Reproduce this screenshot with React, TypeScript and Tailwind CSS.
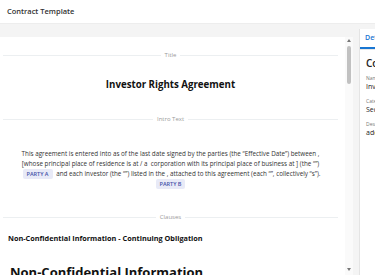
import React from "react";

function Divider({ label }: { label: string }) {
  return (
    <div className="flex items-center h-[8px] gap-[4px]">
      <div className="flex-1 h-px bg-[#eceff1]" />
      <span className="text-[6px] leading-[8px] text-[#9a9a9a]">{label}</span>
      <div className="flex-1 h-px bg-[#eceff1]" />
    </div>
  );
}

function Badge({ children }: { children: React.ReactNode }) {
  return (
    <span className="inline-block align-middle mx-[2px] px-[4px] h-[10px] leading-[10px] rounded-[2px] bg-[#e8eaf7] text-[#4652a8] text-[5.5px] font-semibold">
      {children}
    </span>
  );
}

export default function App() {
  return (
    <div className="w-[375px] h-[275px] overflow-hidden bg-white font-['Open_Sans',sans-serif] text-[#222]">
      <div className="h-[24px] border-b border-[#ededed] flex items-center px-[7px]">
        <span className="text-[7.5px] font-semibold text-[#333]">Contract Template</span>
      </div>
      <div className="flex h-[251px] bg-[#f4f4f4]">
        <div className="w-[353px] shrink-0 flex flex-col pt-[13px]">
          <div className="flex-1 flex bg-white overflow-hidden">
            <div className="w-[345px] pl-[3px] pr-[7px] pt-[14px]">
              <Divider label="Title" />
              <div className="mt-[19px] h-[14px] leading-[14px] text-center text-[9.7px] font-bold text-[#111]">
                Investor Rights Agreement
              </div>
              <div className="mt-[23px]">
                <Divider label="Intro Text" />
              </div>
              <div className="mt-[26px] text-center text-[6.3px] leading-[10px] text-[#333] whitespace-nowrap">
                <div className="h-[10px]">
                  This agreement is entered into as of the last date signed by the parties (the “Effective Date”) between ,
                </div>
                <div className="h-[10px]">
                  [whose principal place of residence is at / a&nbsp; corporation with its principal place of business at ] (the “”)
                </div>
                <div className="h-[10px]">
                  <Badge>PARTY A</Badge> and each investor (the “”) listed in the , attached to this agreement (each “”, collectively “s”).
                </div>
                <div className="h-[10px]">
                  <Badge>PARTY B</Badge>
                </div>
              </div>
              <div className="mt-[24px]">
                <Divider label="Clauses" />
              </div>
              <div className="mt-[12px] pl-[5px] h-[10px] leading-[10px] text-[7.3px] font-bold text-[#111] whitespace-nowrap">
                Non-Confidential Information - Continuing Obligation
              </div>
              <div className="mt-[21px] pl-[7px] h-[16px] leading-[16px] text-[13px] font-bold text-[#111] whitespace-nowrap">
                Non-Confidential Information
              </div>
            </div>
            <div className="w-[8px] flex flex-col items-center bg-[#fafafa] py-[1px]">
              <div className="w-0 h-0 mt-[1px] border-l-[2px] border-r-[2px] border-b-[3px] border-l-transparent border-r-transparent border-b-[#777]" />
              <div className="mt-[4px] w-[4px] h-[38px] rounded-full bg-[#c1c1c1]" />
              <div className="flex-1" />
              <div className="w-0 h-0 mb-[3px] border-l-[2px] border-r-[2px] border-t-[3px] border-l-transparent border-r-transparent border-t-[#777]" />
            </div>
          </div>
        </div>
        <div className="w-[6px] shrink-0" />
        <div className="w-[200px] shrink-0 mt-[5px] bg-white border-l border-[#e4e4e4] flex flex-col">
          <div className="h-[21px] border-b border-[#e8e8e8] flex">
            <div className="px-[5px] h-full flex items-center border-b-2 border-[#1976d2]">
              <span className="text-[7px] font-semibold text-[#1976d2]">Details</span>
            </div>
          </div>
          <div className="px-[6px] pt-[6px]">
            <div className="text-[10px] leading-[14px] font-semibold text-[#222]">Contract Template</div>
            <div className="mt-[5px] text-[5px] leading-[7px] text-[#777]">Name</div>
            <div className="text-[7px] leading-[10px] text-[#222]">Investor Rights Agreement</div>
            <div className="mt-[6px] text-[5px] leading-[7px] text-[#777]">Category</div>
            <div className="text-[7px] leading-[10px] text-[#222]">Securities</div>
            <div className="mt-[6px] text-[5px] leading-[7px] text-[#777]">Description</div>
            <div className="text-[7px] leading-[10px] text-[#222]">adds investor rights</div>
          </div>
        </div>
      </div>
    </div>
  );
}
